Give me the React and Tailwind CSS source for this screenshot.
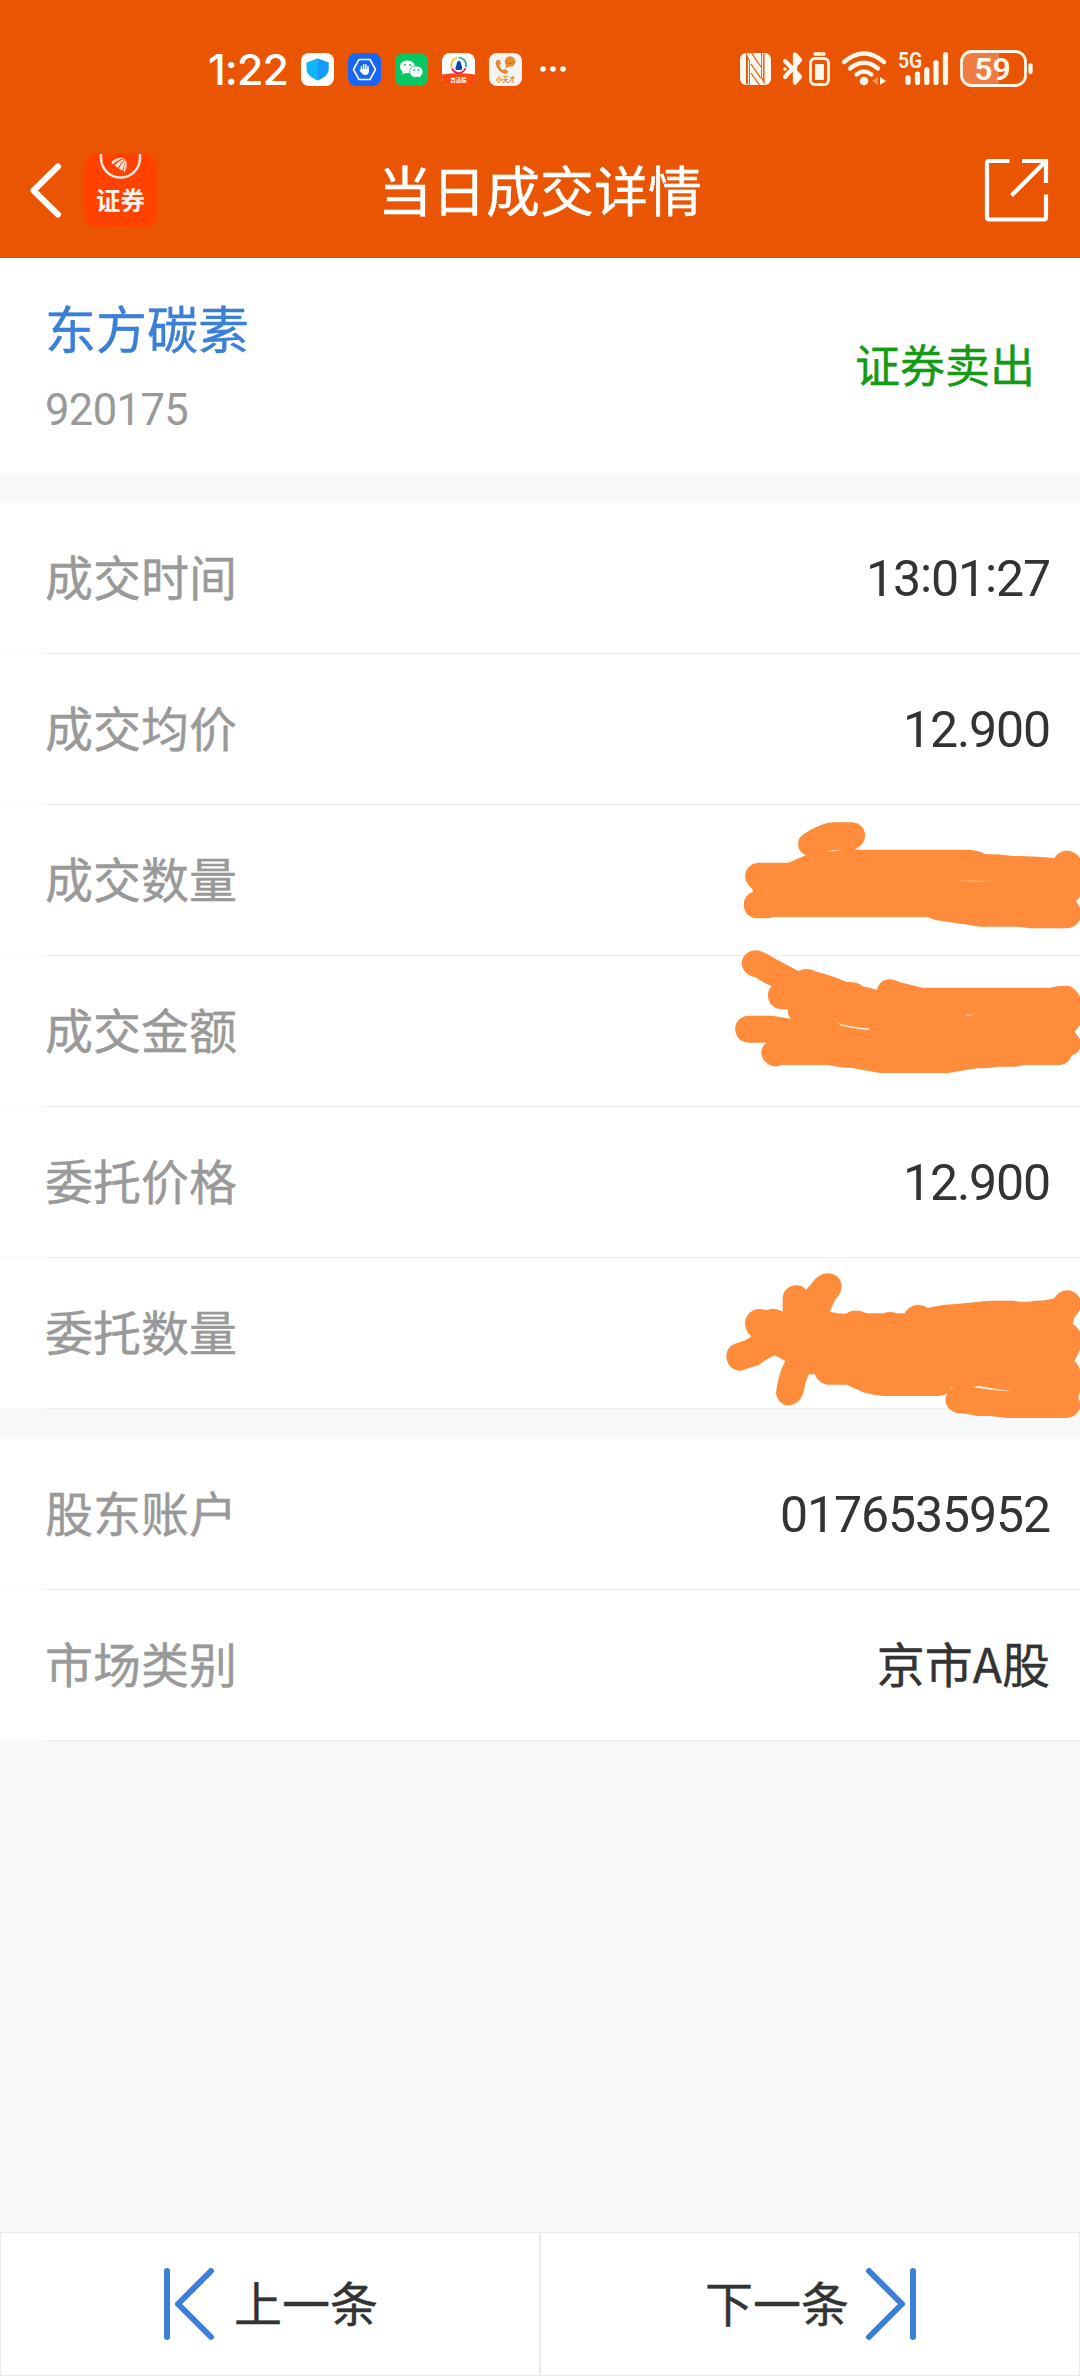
function Digits({ children, className }) {
  return (
    <span className={`flex font-['Roboto',sans-serif] [-webkit-text-stroke:0px] ${className}`}>
      {children.split(":").map((part, i) => (
        <span key={i} className="flex">
          {i > 0 && <span className="relative -top-[4px]">:</span>}
          <span>{part}</span>
        </span>
      ))}
    </span>
  );
}

function StatusBar() {
  return (
    <div className="flex h-[138px] items-center [-webkit-text-stroke:0px]">
      <div className="flex items-center pl-[208px]">
        <span className="w-[93px] text-[43px] leading-none font-medium tracking-[-1px] whitespace-nowrap font-['Inter',sans-serif]">
          1:22
        </span>
        <div className="flex gap-[14px]">
          <svg width="33" height="33" viewBox="0 0 33 33">
            <rect width="33" height="33" rx="8" fill="#fff" />
            <path d="M16.5 5.500L27.500 9.500V17Q27 23 16.500 27.500Q6 23 5.500 17V9.500Z" fill="#12b7f8" />
            <path d="M16.500 5.500L27.500 9.500V17Q27 23 16.500 27.500Z" fill="#149bff" />
          </svg>
          <svg width="33" height="33" viewBox="0 0 33 33">
            <rect width="33" height="33" rx="8" fill="#1766f4" />
            <path d="M11 6.500H22L27.500 16.500L22 26.500H11L5.500 16.500Z" fill="none" stroke="#fff" strokeWidth="1.600" strokeLinejoin="round" />
            <path d="M13.500 17V13.500M15.700 17V11.800M17.900 17V11.800M20 18V13.500" stroke="#fff" strokeWidth="1.500" strokeLinecap="round" />
            <path d="M12.800 16H20.800V19Q20.500 22 17.500 22Q15.500 22 14 20.500L11.300 17.500L12.300 16.800Z" fill="#fff" />
          </svg>
          <svg width="33" height="33" viewBox="0 0 33 33">
            <rect width="33" height="33" rx="8" fill="#06c860" />
            <path d="M12.500 7.500C7.500 7.500 5 10.800 5 13.800C5 16 6.200 17.700 7.800 18.800L7.200 21.500L10.200 19.900Q11.500 20.200 12.800 20.100C17 20 20 17.200 20 13.800C20 10.300 16.500 7.500 12.500 7.500Z" fill="#fff" />
            <path d="M21 13C16.800 13 14.500 15.800 14.500 18.800C14.500 22 17.500 24.500 21 24.500Q22.300 24.500 23.500 24.100L26 25.500L25.500 23.200C27 22.200 28 20.700 28 18.800C28 15.700 25 13 21 13Z" fill="#fff" stroke="#06c860" strokeWidth=".8" />
            <g fill="#06c860">
              <circle cx="10" cy="12" r="1" />
              <circle cx="15" cy="12" r="1" />
              <circle cx="19" cy="17" r=".9" />
              <circle cx="23.500" cy="17" r=".9" />
            </g>
          </svg>
          <svg width="33" height="33" viewBox="0 0 33 33">
            <rect width="33" height="33" rx="8" fill="#fff" />
            <path d="M0 21.500Q16 19 33 21.500V25Q33 33 25 33H8Q0 33 0 25Z" fill="#ff4a0e" />
            <g fill="none" strokeWidth="1.700">
              <path d="M9.500 15Q8 7 15 4.800" stroke="#e8c52c" />
              <path d="M16.500 4.500Q25 5.500 24 14" stroke="#21a7a0" />
              <path d="M10 15.500Q13 21 18 19.800Q22 19 23.500 15" stroke="#d7265e" />
            </g>
            <path d="M17 7.500Q19.300 8.500 19.300 12Q21 14.500 20 16.500L18.500 17H15L13.500 16.500Q13 14 14.500 12Q14.500 8.500 17 7.500Z" fill="#0646b3" />
            <text x="16.500" y="29" fontSize="5.500" fontWeight="700" textAnchor="middle" fill="#fff" fontFamily="Noto Sans CJK SC, sans-serif">自选股</text>
          </svg>
          <svg width="33" height="33" viewBox="0 0 33 33">
            <rect width="33" height="33" rx="8" fill="#f6f4f2" />
            <path d="M8 7Q5.500 9 7.500 13.500Q10.500 19.500 15.500 20.800Q18.500 21 19.500 18.500L16 16L13.800 17.200Q11 15 10.200 12.200L12 10.500L10.500 7Z" fill="#e8862c" />
            <circle cx="21" cy="8.500" r="5.300" fill="#ec8a2e" />
            <path d="M17 12L16 15.500L20 13.500Z" fill="#ec8a2e" />
            <path d="M18 9Q21 12.500 24.500 8.500" fill="none" stroke="#c46512" strokeWidth="1" />
            <text x="16.500" y="29" fontSize="6.500" fontWeight="700" textAnchor="middle" fill="#e8862c" fontFamily="Noto Sans CJK SC, sans-serif">小天才</text>
          </svg>
        </div>
        <svg className="ml-[17px]" width="28" height="8" viewBox="0 0 28 8" fill="#fff">
          <circle cx="4" cy="4" r="2.800" />
          <circle cx="14" cy="4" r="2.800" />
          <circle cx="24" cy="4" r="2.800" />
        </svg>
      </div>
      {/* Radio, signal and battery indicators */}
      <svg className="ml-auto mr-[20px]" width="320" height="60" viewBox="20 -1 320 60" fill="none" stroke="#fff7ec">
        <rect x="20" y="13" width="31" height="32" rx="6" fill="#fff7ec" stroke="none" />
        <path d="M26 13L30 21V45H28.500L26 44Z" fill="#ea5504" stroke="none" />
        <path d="M44.500 45L41 37V13H42.500L44.500 14Z" fill="#ea5504" stroke="none" />
        <path d="M31 24L41 38.500M31 33L39.500 45M31.500 13L41 27" stroke="#ea5504" strokeWidth="1.200" />
        <path d="M28.500 20V45M42.500 13V38" stroke="#fff7ec" strokeWidth="1.200" />
        <path d="M65 21L80 36.500L75 42.500V14.500L80 20L65 37" strokeWidth="4.300" strokeLinecap="round" strokeLinejoin="round" />
        <circle cx="65" cy="29" r="1.700" fill="#fff7ec" stroke="none" />
        <rect x="90.500" y="18.500" width="18" height="26" rx="4.500" strokeWidth="2.800" />
        <path d="M95 14H104" strokeWidth="3.500" strokeLinecap="round" />
        <rect x="95" y="24" width="9" height="16" rx="1" fill="#fff7ec" stroke="none" />
        <g strokeWidth="4.300" strokeLinecap="round">
          <path d="M124 22Q144 5 164 22" />
          <path d="M130 28.500Q144 17 158 28.500" />
          <path d="M136.500 34.500Q144 28.500 151.500 34.500" />
        </g>
        <circle cx="144" cy="41" r="4.300" fill="#fff7ec" stroke="none" />
        <path d="M158 37V45L152 41Z" fill="#f4945a" stroke="none" />
        <path d="M160 37V45L166 41Z" fill="#fff7ec" stroke="none" />
        <text transform="translate(190 27.500) scale(.9 1)" fontSize="21.500" fontWeight="600" fill="#fff7ec" stroke="none" textAnchor="middle" fontFamily="Roboto, sans-serif">5G</text>
        <path d="M188 37.500V42.500M197.500 34V42.500M206.800 29.500V42.500M216 22.500V42.500M225.500 14.500V42.500" strokeWidth="5.200" strokeLinecap="round" />
        <path d="M251 12H279V45H251Q242 45 242 35V21Q242 12 251 12Z" fill="#ef7c42" stroke="none" />
        <rect x="241.500" y="11.500" width="64" height="34" rx="10" strokeWidth="2.800" />
        <text x="272.500" y="40" fontSize="32" fontWeight="600" fill="#fff7ec" stroke="none" textAnchor="middle" fontFamily="Roboto, sans-serif">59</text>
        <path d="M310.500 25.500V32" strokeWidth="4.300" strokeLinecap="round" />
      </svg>
    </div>
  );
}

function NavBar() {
  return (
    <div className="grid h-[120px] grid-cols-3 items-start">
      <div className="flex pt-[15px] pl-[28px]">
        <svg className="mt-[8px]" width="36" height="60" viewBox="0 0 36 60">
          <path d="M30 5.500L5.500 29.500L30 53.500" fill="none" stroke="#fff" strokeWidth="6" strokeLinecap="round" strokeLinejoin="round" />
        </svg>
        <svg className="ml-[20px]" width="73" height="74" viewBox="0 0 73 74">
          <rect width="73" height="74" rx="14" fill="#ff4200" />
          <path d="M17 1V5A19.500 19.500 0 0 0 56 5V1" fill="none" stroke="#ffe4d8" strokeWidth="2.500" />
          <g fill="#ffe4d8">
            <path d="M28 8Q34 3.500 41 5Q34 6 29 11.500Q27 10 28 8Z" />
            <path d="M30.500 12.500Q35 7 41 6Q36 10 34 15Z" />
            <path d="M35 16Q37 10 41.500 6.500Q40 12 38.500 17.500Z" />
            <path d="M39.500 18Q40.500 11 42 6.500Q44 12 40.500 19.500Z" />
          </g>
          <text x="36.500" y="56.500" fontSize="24.500" fontWeight="700" textAnchor="middle" fill="#fff2ea" fontFamily="Noto Sans CJK SC, sans-serif">证券</text>
        </svg>
      </div>
      <h1 className="pt-[15px] text-center text-[54px] leading-[72px] whitespace-nowrap">当日成交详情</h1>
      <svg className="mt-[19px] mr-[31px] justify-self-end" width="66" height="66" viewBox="0 0 66 66" fill="none" stroke="#fff" strokeWidth="4.200">
        <path d="M26.500 4H6Q4 4 4 6V60Q4 62.500 6.500 62.500H61Q63 62.500 63 60V37.500" />
        <path d="M39 4H63V26M63 4L28.500 38.500" />
      </svg>
    </div>
  );
}

const SCRIBBLE_AMOUNT = "M176 188H265L317 166A43 38 0 0 1 315 100Q365 68 400 67H455C505 70 510 132 462 149H800Q840 150 853 162Q900 162 940 168Q1010 168 1063 175C1080 145 1120 145 1140 175V235V290L1128 304L1140 322V360Q1125 384 1100 385H990L955 380H840Q780 371 705 360L682 351H220Q210 355 195 355H170C120 350 120 285 160 276Q158 265 150 260C120 230 140 190 176 188Z";
const SCRIBBLE_TOTAL = "M165 451Q190 452 220 473L295 513Q320 500 345 514Q390 525 440 546Q475 545 488 559L531 569C540 535 570 530 600 547L668 563H1050Q1080 556 1108 558Q1130 568 1140 590V675L1124 695L1140 718V745Q1135 760 1115 767Q1105 792 1080 795H970Q960 800 940 800H890Q870 805 830 805L745 819H540L460 805Q420 803 380 795H245Q235 800 220 799C185 790 170 750 200 728H145C95 725 90 652 145 647H215L272 656Q262 645 263 628H245C200 625 195 575 215 559Q190 548 165 531C110 520 115 455 165 451Z";
const SCRIBBLE_ORDER = "M176 177Q190 177 200 181Q220 170 248 185V145C250 105 300 95 318 119Q330 108 345 88C380 50 435 75 423 120Q420 135 407 146L389 185Q410 191 437 191Q465 173 500 190H550Q570 182 590 190H614C630 160 665 160 682 174Q730 164 760 163L870 152H940Q970 159 1005 152Q1040 153 1063 145C1080 115 1120 110 1140 145V180L1123 203L1118 222Q1130 228 1140 245V300L1123 334Q1135 342 1140 360V425L1135 443L1140 455V475Q1130 502 1100 504H920L870 498H835Q800 490 770 489C735 480 730 445 744 430Q730 438 715 438H550Q520 436 490 427L440 404H380Q355 400 344 373H327Q315 395 312 420C300 480 235 480 228 428Q235 370 256 333L224 316Q195 330 175 346Q150 353 120 363C70 358 65 290 110 280Q140 272 154 259C120 230 135 180 176 177Z";

const trade = [
  { label: "成交时间", value: "13:01:27" },
  { label: "成交均价", value: "12.900" },
  { label: "成交数量", scribble: SCRIBBLE_AMOUNT, box: "0 0 1140 450", gap: "M770 242.500H790L880 243L825 244.500ZM380 154L415 149.500L420 151L395 154.500Z", place: "top-[-5px] h-[150px]" },
  { label: "成交金额", scribble: SCRIBBLE_TOTAL, box: "0 420 1140 450", gap: "M412 667L425 673Q460 682 505 685L510 690Q450 686 422 676ZM795 645L805 643.500L822 645L805 646.500Z", place: "top-[-16px] h-[150px]" },
  { label: "委托价格", value: "12.900" },
  { label: "委托数量", scribble: SCRIBBLE_ORDER, box: "0 0 1140 600", gap: "M815 411L838 408Q885 417 935 424Q870 421 815 411ZM748 416L755 411L762 413Z", place: "top-[-8px] h-[200px]" },
];

const account = [
  { label: "股东账户", value: "0176535952" },
  { label: "市场类别", value: "京市A股", cjk: true },
];

function Row({ label, value, cjk, scribble, box, gap, place }) {
  return (
    <div className="relative h-[151px] bg-white">
      <div className="flex h-[150px] items-start justify-between pt-[36px] pr-[30px] pl-[45px] text-[48px] leading-[72px]">
        <span className="text-[#999]">{label}</span>
        {value && cjk && <span className="text-[#333]">{value}</span>}
        {value && !cjk && (
          <Digits className="pt-[4px] text-[50px] tracking-[-1.1px] text-[#333]">{value}</Digits>
        )}
      </div>
      <div className="bg-[#f8f8f9] pl-[45px]">
        <div className="h-px bg-[#ebebeb]" />
      </div>
      {scribble && (
        <svg className={`absolute right-0 z-10 w-[380px] ${place}`} viewBox={box}>
          <path d={scribble} fill="#ff8c3b" />
          <path d={gap} fill="#fff0e0" />
        </svg>
      )}
    </div>
  );
}

export default function App() {
  return (
    <div className="flex h-[2376px] w-[1080px] flex-col overflow-hidden bg-[#f6f8fa] font-['Noto_Sans_CJK_SC',sans-serif] [-webkit-text-stroke:0.4px]">
      <header className="h-[258px] bg-[#ea5504] text-white">
        <StatusBar />
        <NavBar />
      </header>

      <section className="flex h-[215px] justify-between bg-white pr-[45px] pl-[45px]">
        <div className="flex flex-col">
          <span className="mt-[33px] text-[51px] leading-[72px] text-[#3b7fd6]">东方碳素</span>
          <Digits className="mt-[18px] text-[43.5px] leading-[60px] tracking-[-0.6px] text-[#999]">920175</Digits>
        </div>
        <span className="mt-[70px] text-[45px] leading-[72px] text-[#149a14]">证券卖出</span>
      </section>

      <section className="mt-[30px]">
        {trade.map((row) => (
          <Row key={row.label} {...row} />
        ))}
      </section>
      <section className="mt-[30px]">
        {account.map((row) => (
          <Row key={row.label} {...row} />
        ))}
      </section>

      <footer className="mt-auto grid h-[144px] grid-cols-2 text-[48px] text-[#333]">
        <button className="flex items-center justify-center gap-[18px] border border-[#ebebeb] bg-white">
          <svg width="54" height="74" viewBox="0 0 54 74" fill="none" stroke="#3b7fd6" strokeWidth="6" strokeLinecap="round" strokeLinejoin="round">
            <path d="M5 4V70M49 4L16 37L49 70" />
          </svg>
          <span className="pb-[6px]">上一条</span>
        </button>
        <button className="flex items-center justify-center gap-[15px] border border-[#ebebeb] bg-white pl-[3px]">
          <span className="pb-[6px]">下一条</span>
          <svg width="54" height="74" viewBox="0 0 54 74" fill="none" stroke="#3b7fd6" strokeWidth="6" strokeLinecap="round" strokeLinejoin="round">
            <path d="M49 4V70M5 4L38 37L5 70" />
          </svg>
        </button>
      </footer>
    </div>
  );
}
